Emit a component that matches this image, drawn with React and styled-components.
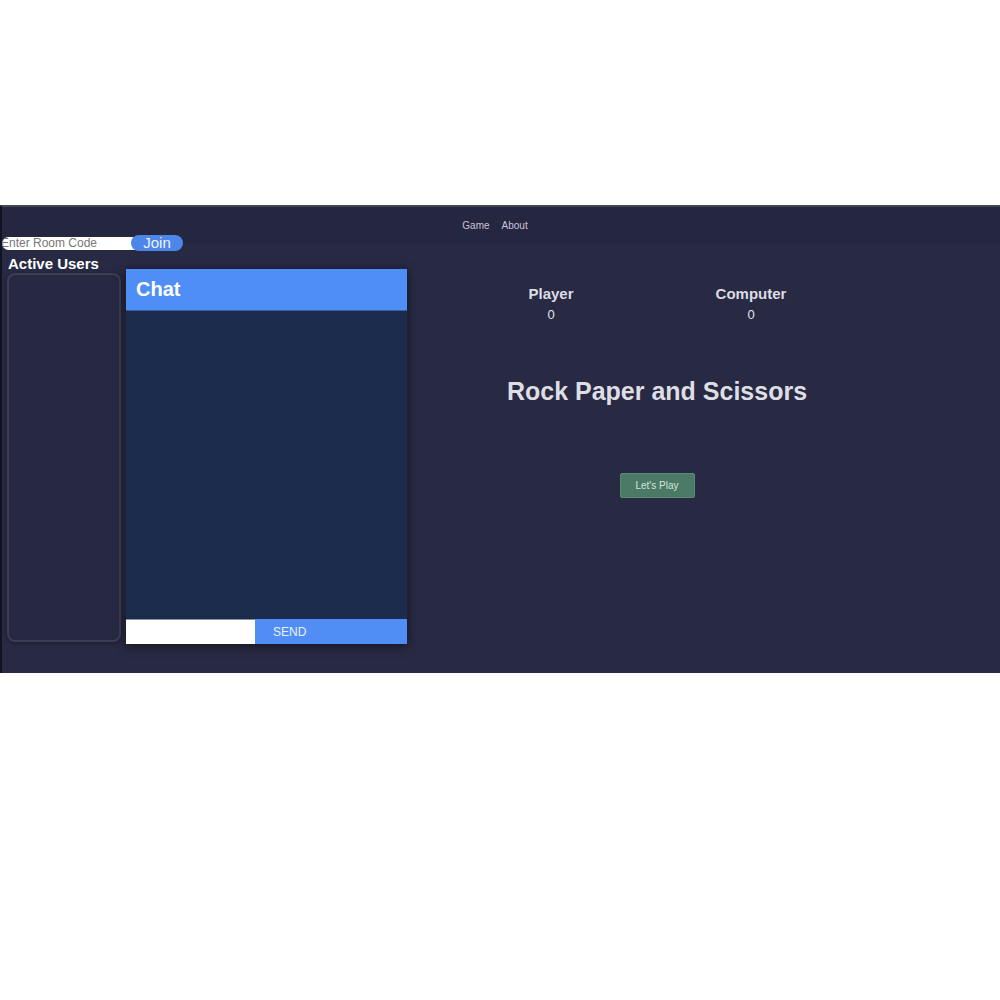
import React, { useState } from 'react';
import styled, { createGlobalStyle } from 'styled-components';

const GlobalStyle = createGlobalStyle`
  html, body {
    margin: 0;
    padding: 0;
    background: #fff;
    font-family: "Liberation Sans", Arial, sans-serif;
  }
`;

const Page = styled.div`
  padding-top: 205px;
  height: 1000px;
  box-sizing: border-box;
`;

const AppShell = styled.div`
  height: 468px;
  box-sizing: border-box;
  background: #282943;
  border-top: 2px solid #46464e;
  border-left: 2px solid #121220;
  display: flex;
  flex-direction: column;
`;

const NavBar = styled.nav`
  height: 37px;
  flex-shrink: 0;
  background: #25263f;
  display: flex;
  align-items: center;
  justify-content: center;
  gap: 12px;
  padding-right: 12px;
`;

const NavLink = styled.a`
  font-size: 10px;
  color: #cac3d9;
  cursor: pointer;
  text-decoration: none;
`;

const RoomRow = styled.div`
  display: flex;
  align-items: center;
  margin-top: -9px;
  height: 16px;
`;

const RoomInput = styled.input`
  width: 133px;
  height: 13px;
  box-sizing: border-box;
  border: none;
  border-radius: 7px 0 0 7px;
  padding: 0;
  font-size: 12px;
  font-family: "Liberation Sans", Arial, sans-serif;
  background: #fff;
  outline: none;
  text-indent: -1px;
  &::placeholder {
    color: #777;
  }
`;

const JoinButton = styled.button`
  width: 52px;
  height: 16px;
  margin-left: -4px;
  border: none;
  border-radius: 8px;
  background: #4d86e9;
  color: #eef2ff;
  font-size: 15px;
  font-family: "Liberation Sans", Arial, sans-serif;
  padding: 0;
  line-height: 16px;
  cursor: pointer;
`;

const MainRow = styled.div`
  display: flex;
  align-items: flex-start;
  margin-top: 4px;
`;

const UsersColumn = styled.div`
  width: 114px;
  padding-left: 5px;
  display: flex;
  flex-direction: column;
`;

const UsersTitle = styled.h3`
  margin: 0 0 0 1px;
  font-size: 15px;
  line-height: 18px;
  font-weight: bold;
  color: #fff;
  white-space: nowrap;
`;

const UsersBox = styled.div`
  height: 369px;
  box-sizing: border-box;
  border: 2px solid #3c3d56;
  border-radius: 8px;
  background: #272842;
  box-shadow: 0 1px 4px rgba(0, 0, 0, 0.35);
`;

const ChatPanel = styled.div`
  width: 281px;
  margin-top: 14px;
  margin-left: 5px;
  display: flex;
  flex-direction: column;
  box-shadow: 0 2px 10px rgba(0, 0, 0, 0.5);
`;

const ChatHeader = styled.div`
  height: 42px;
  background: #4f8ef6;
  display: flex;
  align-items: center;
  padding-left: 10px;
  font-size: 20px;
  font-weight: bold;
  color: #fff;
  border-bottom: 1px solid #3a5f9e;
  box-sizing: border-box;
`;

const ChatBody = styled.div`
  height: 308px;
  background: #1b2b4b;
`;

const ChatForm = styled.div`
  display: flex;
  height: 25px;
`;

const ChatInput = styled.input`
  width: 129px;
  box-sizing: border-box;
  border: none;
  border-top: 1px solid #8a8fa0;
  background: #fff;
  outline: none;
  padding: 0 4px;
`;

const SendButton = styled.button`
  flex: 1;
  border: none;
  background: #508ef5;
  color: #eaf0ff;
  font-size: 12px;
  font-family: "Liberation Sans", Arial, sans-serif;
  text-align: left;
  padding: 0 0 0 18px;
  cursor: pointer;
`;

const GameColumn = styled.div`
  width: 500px;
  display: flex;
  flex-direction: column;
  align-items: center;
  padding-top: 30px;
`;

const ScoreRow = styled.div`
  display: flex;
  margin-right: 12px;
`;

const ScoreItem = styled.div`
  width: 200px;
  display: flex;
  flex-direction: column;
  align-items: center;
  color: #dcdce4;
`;

const ScoreLabel = styled.div`
  font-size: 15px;
  font-weight: bold;
  line-height: 18px;
`;

const ScoreValue = styled.div`
  font-size: 13px;
  margin-top: 4px;
  color: #e4e4ea;
`;

const GameTitle = styled.h1`
  margin: 54px 0 0 0;
  font-size: 25px;
  line-height: 30px;
  font-weight: bold;
  color: #dedee4;
`;

const PlayButton = styled.button`
  margin-top: 67px;
  width: 75px;
  height: 25px;
  border: 1px solid #5a8a75;
  border-radius: 2px;
  background: #4a7a66;
  color: #d6e2dc;
  font-size: 10px;
  font-family: "Liberation Sans", Arial, sans-serif;
  cursor: pointer;
`;

export default function App() {
  const [score] = useState({ player: 0, computer: 0 });

  return (
    <Page>
      <GlobalStyle />
      <AppShell>
        <NavBar>
          <NavLink>Game</NavLink>
          <NavLink>About</NavLink>
        </NavBar>
        <RoomRow>
          <RoomInput placeholder="Enter Room Code" />
          <JoinButton>Join</JoinButton>
        </RoomRow>
        <MainRow>
          <UsersColumn>
            <UsersTitle>Active Users</UsersTitle>
            <UsersBox />
          </UsersColumn>
          <ChatPanel>
            <ChatHeader>Chat</ChatHeader>
            <ChatBody />
            <ChatForm>
              <ChatInput />
              <SendButton>SEND</SendButton>
            </ChatForm>
          </ChatPanel>
          <GameColumn>
            <ScoreRow>
              <ScoreItem>
                <ScoreLabel>Player</ScoreLabel>
                <ScoreValue>{score.player}</ScoreValue>
              </ScoreItem>
              <ScoreItem>
                <ScoreLabel>Computer</ScoreLabel>
                <ScoreValue>{score.computer}</ScoreValue>
              </ScoreItem>
            </ScoreRow>
            <GameTitle>Rock Paper and Scissors</GameTitle>
            <PlayButton>Let's Play</PlayButton>
          </GameColumn>
        </MainRow>
      </AppShell>
    </Page>
  );
}
